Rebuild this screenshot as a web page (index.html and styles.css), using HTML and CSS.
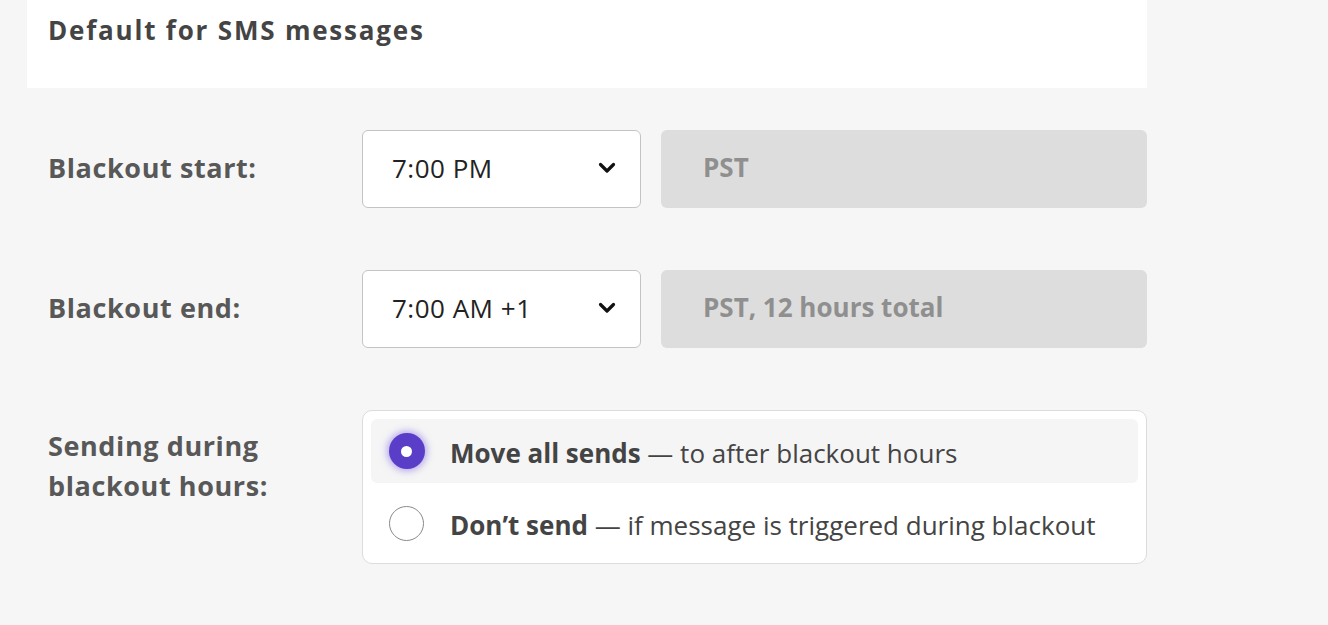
FILE: index.html
```html
<!DOCTYPE html>
<html>
<head>
<meta charset="utf-8">
<link rel="stylesheet" href="styles.css">
</head>
<body>
<div class="page">
  <div class="header">
    <h1 class="title">Default for SMS messages</h1>
  </div>
  <div class="form">
    <div class="label">Blackout start:</div>
    <div class="select">
      <span class="select-value">7:00 PM</span>
      <svg class="chev" width="18" height="12" viewBox="0 0 18 12"><path d="M2.5 2.5 L9 9 L15.5 2.5" fill="none" stroke="#111" stroke-width="3.2" stroke-linecap="round" stroke-linejoin="round"/></svg>
    </div>
    <div class="readonly">PST</div>

    <div class="label">Blackout end:</div>
    <div class="select">
      <span class="select-value">7:00 AM +1</span>
      <svg class="chev" width="18" height="12" viewBox="0 0 18 12"><path d="M2.5 2.5 L9 9 L15.5 2.5" fill="none" stroke="#111" stroke-width="3.2" stroke-linecap="round" stroke-linejoin="round"/></svg>
    </div>
    <div class="readonly">PST, 12 hours total</div>

    <div class="label label-multi">Sending during<br>blackout hours:</div>
    <div class="radio-group">
      <div class="option option-active">
        <span class="radio radio-on"><span class="dot"></span></span>
        <span class="option-text"><b>Move all sends</b> — to after blackout hours</span>
      </div>
      <div class="option">
        <span class="radio"></span>
        <span class="option-text"><b>Don’t send</b> — if message is triggered during blackout</span>
      </div>
    </div>
  </div>
</div>
</body>
</html>
```
FILE: styles.css
```css
html, body {
  margin: 0;
  padding: 0;
  background: #f6f6f6;
  font-family: "Open Sans", "Lato", sans-serif;
}
.page {
  width: 1120px;
  margin-left: 27px;
}
.header {
  background: #fff;
  height: 88px;
  padding-left: 21px;
  box-sizing: border-box;
}
.title {
  margin: 0;
  padding-top: 12px;
  font-size: 26px;
  font-weight: 700;
  letter-spacing: 1.8px;
  color: #444;
  line-height: 36px;
}
.form {
  display: grid;
  grid-template-columns: 294px 279px 486px;
  column-gap: 20px;
  row-gap: 62px;
  padding: 42px 0 0 21px;
}
.label {
  display: flex;
  align-items: center;
  font-size: 27px;
  font-weight: 700;
  letter-spacing: 0.6px;
  color: #585858;
  height: 78px;
  padding-bottom: 4px;
  box-sizing: border-box;
}
.label-multi {
  align-items: flex-start;
  padding-top: 16px;
  padding-bottom: 0;
  line-height: 40px;
  height: auto;
}
.select {
  height: 78px;
  box-sizing: border-box;
  background: #fff;
  border: 1.5px solid #c4c4c4;
  border-radius: 6px;
  display: flex;
  align-items: center;
  justify-content: space-between;
  padding: 0 24px 3px 29px;
}
.select-value {
  font-size: 26px;
  letter-spacing: 0.5px;
  color: #222;
}
.chev { display: block; margin-top: 1px; }
.readonly {
  height: 78px;
  box-sizing: border-box;
  background: #dddddd;
  border-radius: 6px;
  display: flex;
  align-items: center;
  padding: 0 0 4px 42px;
  font-size: 26px;
  font-weight: 700;
  color: #8f8f8f;
}
.radio-group {
  grid-column: 2 / 4;
  background: #fff;
  border: 1.5px solid #dcdcdc;
  border-radius: 10px;
  padding: 8px;
  display: flex;
  flex-direction: column;
  gap: 8px;
}
.option {
  height: 64px;
  display: flex;
  align-items: center;
  padding-left: 18px;
  border-radius: 6px;
  font-size: 26px;
  color: #444;
}
.option-active { background: #f5f5f5; }
.option-text { padding-top: 3px; }
.option-text b { font-weight: 700; }
.radio {
  width: 35px;
  height: 35px;
  box-sizing: border-box;
  border-radius: 50%;
  border: 1.5px solid #8a8a8a;
  background: #fff;
  margin-right: 26px;
  flex: none;
  display: flex;
  align-items: center;
  justify-content: center;
}
.radio-on {
  width: 36px;
  height: 36px;
  border: none;
  background: #5a3ec8;
  box-shadow: 0 0 7px 2px rgba(120, 90, 230, 0.5);
  margin-left: -0.5px;
  margin-right: 25.5px;
}
.dot {
  width: 11px;
  height: 11px;
  border-radius: 50%;
  background: #fff;
}
```
